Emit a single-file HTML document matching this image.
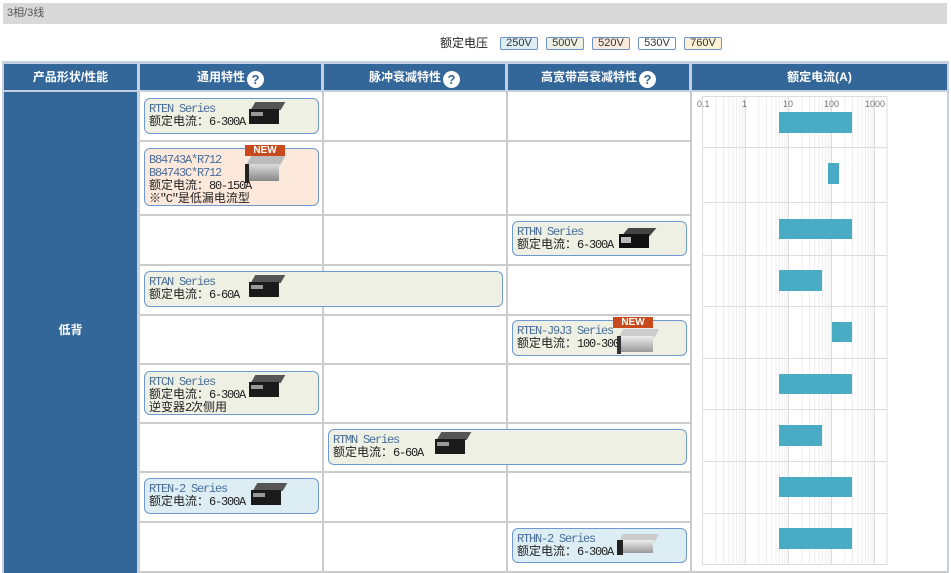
<!DOCTYPE html>
<html><head><meta charset="utf-8">
<style>
*{margin:0;padding:0;box-sizing:border-box}
body{width:951px;height:573px;background:#fff;position:relative;overflow:hidden;font-family:"Liberation Mono","Noto Sans CJK SC",monospace;font-size:12px;color:#222}
.a{position:absolute}
.c{letter-spacing:0}
.top{left:3px;top:3px;width:944px;height:21px;background:#d9d9d9;color:#555;font-family:"Liberation Sans","Noto Sans CJK SC",sans-serif;font-size:11px;line-height:21px;padding-left:4px}
.vl{top:36px;font-family:"Liberation Sans","Noto Sans CJK SC",sans-serif;font-size:12px;line-height:14px}
.vb{top:37px;height:13px;border:1px solid #6e93c9;border-radius:2px;font-family:"Liberation Sans",sans-serif;font-size:11px;line-height:11px;text-align:center;color:#333}
.hd{top:64px;height:26px;background:#336699;color:#fff;font-family:"Liberation Sans","Noto Sans CJK SC",sans-serif;font-weight:bold;font-size:12px;line-height:26px;text-align:center}
.q{display:inline-block;width:17px;height:17px;border-radius:50%;background:#fff;color:#336699;font-size:13px;line-height:17px;text-align:center;vertical-align:-3px;margin-left:2px;font-weight:bold}
.vline{width:2px;background:#ccc}
.hline{height:2px;background:#ccc}
.card{border:1px solid #6f98d0;border-radius:6px;padding:4px 0 0 4px;line-height:13px;overflow:visible;white-space:nowrap;letter-spacing:-1.2px}
.g{background:#edf0e2}.p{background:#fde9dc}.b{background:#dcedf4}
.s{color:#4a6e9a}
.img{position:absolute;width:34px;height:22px;letter-spacing:0}
.img i{position:absolute;display:block}
.new{position:absolute;width:40px;height:11px;background:#c8491b;color:#fff;font-family:"Liberation Sans",sans-serif;font-weight:bold;font-size:10px;line-height:11px;text-align:center;letter-spacing:0}
</style></head><body>
<div class="a top">3相/3线</div>
<div class="a vl" style="left:440px">额定电压</div>
<div class="a vb" style="left:500px;width:38px;background:#dcedf4">250V</div>
<div class="a vb" style="left:546px;width:38px;background:#edf0e2">500V</div>
<div class="a vb" style="left:592px;width:38px;background:#fde9dc">520V</div>
<div class="a vb" style="left:638px;width:38px;background:#fff">530V</div>
<div class="a vb" style="left:684px;width:38px;background:#fdf0d4">760V</div>

<div class="a" style="left:2px;top:61px;width:947px;height:512px;background:#ccc"></div>
<div class="a" style="left:2px;top:61px;width:947px;height:3px;background:#c3d1e2"></div>
<div class="a" style="left:2px;top:61px;width:2px;height:512px;background:#c3d1e2"></div>
<div class="a" style="left:4px;top:92px;width:943px;height:481px;background:#fff"></div>
<div class="a hd" style="left:4px;width:133px">产品形状/性能</div>
<div class="a hd" style="left:140px;width:181px">通用特性<span class="q">?</span></div>
<div class="a hd" style="left:324px;width:181px">脉冲衰减特性<span class="q">?</span></div>
<div class="a hd" style="left:508px;width:181px">高宽带高衰减特性<span class="q">?</span></div>
<div class="a hd" style="left:692px;width:255px">额定电流(A)</div>
<div class="a" style="left:4px;top:92px;width:133px;height:481px;background:#336699;color:#fff;font-family:'Liberation Sans','Noto Sans CJK SC',sans-serif;font-weight:bold;font-size:12px;text-align:center;line-height:14px;padding-top:231px">低背</div>
<div class="a vline" style="left:137px;top:64px;height:509px;background:#c3d1e2;width:3px"></div>
<div class="a vline" style="left:322px;top:92px;height:481px"></div>
<div class="a vline" style="left:506px;top:92px;height:481px"></div>
<div class="a vline" style="left:690px;top:92px;height:481px"></div>
<div class="a" style="left:947px;top:61px;width:2px;height:512px;background:#c3d1e2"></div>
<div class="a" style="left:322px;top:64px;width:2px;height:26px;background:#c3d1e2"></div>
<div class="a" style="left:506px;top:64px;width:2px;height:26px;background:#c3d1e2"></div>
<div class="a" style="left:690px;top:64px;width:2px;height:26px;background:#c3d1e2"></div>
<div class="a" style="left:4px;top:90px;width:943px;height:2px;background:#c3d1e2"></div>
<div class="a hline" style="left:140px;top:140px;width:550px"></div>
<div class="a hline" style="left:140px;top:214px;width:550px"></div>
<div class="a hline" style="left:140px;top:264px;width:550px"></div>
<div class="a hline" style="left:140px;top:314px;width:550px"></div>
<div class="a hline" style="left:140px;top:363px;width:550px"></div>
<div class="a hline" style="left:140px;top:422px;width:550px"></div>
<div class="a hline" style="left:140px;top:471px;width:550px"></div>
<div class="a hline" style="left:140px;top:521px;width:550px"></div>
<div class="a hline" style="left:140px;top:571px;width:807px"></div>

<div class="a card g" style="left:144px;top:98px;width:175px;height:36px"><span class="s">RTEN Series</span><br><span class="c">额定电流：</span>6-300A
<div class="img" style="left:104px;top:3px"><i style="left:4px;top:0;width:30px;height:8px;background:#555;transform:skewX(-30deg)"></i><i style="left:0;top:7px;width:30px;height:15px;background:#1a1a1a"></i><i style="left:2px;top:10px;width:12px;height:4px;background:#999"></i></div></div>
<div class="a card p" style="left:144px;top:148px;width:175px;height:58px;padding-top:5px"><span class="s">B84743A*R712<br>B84743C*R712</span><br><span class="c">额定电流：</span>80-150A<br>※"C"<span class="c">是低漏电流型</span>
<div class="img" style="left:100px;top:6px;width:38px;height:28px"><i style="left:4px;top:0;width:34px;height:10px;background:#bbb;transform:skewX(-30deg)"></i><i style="left:0;top:9px;width:34px;height:17px;background:linear-gradient(#ddd,#888)"></i><i style="left:0;top:9px;width:4px;height:19px;background:#222"></i></div><div class="new" style="left:100px;top:-4px">NEW</div></div>
<div class="a card g" style="left:512px;top:221px;width:175px;height:35px"><span class="s">RTHN Series</span><br><span class="c">额定电流：</span>6-300A
<div class="img" style="left:106px;top:6px"><i style="left:6px;top:0;width:28px;height:8px;background:#444;transform:skewX(-40deg)"></i><i style="left:0;top:6px;width:30px;height:14px;background:#111"></i><i style="left:2px;top:9px;width:10px;height:6px;background:#bbb"></i></div></div>
<div class="a card g" style="left:144px;top:271px;width:359px;height:36px"><span class="s">RTAN Series</span><br><span class="c">额定电流：</span>6-60A
<div class="img" style="left:104px;top:3px"><i style="left:4px;top:0;width:30px;height:8px;background:#555;transform:skewX(-30deg)"></i><i style="left:0;top:7px;width:30px;height:15px;background:#1a1a1a"></i><i style="left:2px;top:10px;width:12px;height:4px;background:#999"></i></div></div>
<div class="a card g" style="left:512px;top:320px;width:175px;height:36px"><span class="s">RTEN-J9J3 Series</span><br><span class="c">额定电流：</span>100-300A
<div class="img" style="left:104px;top:8px;width:40px;height:26px"><i style="left:4px;top:0;width:36px;height:8px;background:#ccc;transform:skewX(-30deg)"></i><i style="left:0;top:7px;width:36px;height:16px;background:linear-gradient(#eee,#999)"></i><i style="left:0;top:7px;width:4px;height:18px;background:#333"></i></div><div class="new" style="left:100px;top:-4px">NEW</div></div>
<div class="a card g" style="left:144px;top:371px;width:175px;height:44px"><span class="s">RTCN Series</span><br><span class="c">额定电流：</span>6-300A<br><span class="c">逆变器</span>2<span class="c">次侧用</span>
<div class="img" style="left:104px;top:3px"><i style="left:4px;top:0;width:30px;height:8px;background:#555;transform:skewX(-30deg)"></i><i style="left:0;top:7px;width:30px;height:15px;background:#1a1a1a"></i><i style="left:2px;top:10px;width:12px;height:4px;background:#999"></i></div></div>
<div class="a card g" style="left:328px;top:429px;width:359px;height:36px"><span class="s">RTMN Series</span><br><span class="c">额定电流：</span>6-60A
<div class="img" style="left:106px;top:2px"><i style="left:4px;top:0;width:30px;height:8px;background:#555;transform:skewX(-30deg)"></i><i style="left:0;top:7px;width:30px;height:15px;background:#1a1a1a"></i><i style="left:2px;top:10px;width:12px;height:4px;background:#999"></i></div></div>
<div class="a card b" style="left:144px;top:478px;width:175px;height:36px"><span class="s">RTEN-2 Series</span><br><span class="c">额定电流：</span>6-300A
<div class="img" style="left:106px;top:4px"><i style="left:4px;top:0;width:30px;height:8px;background:#555;transform:skewX(-30deg)"></i><i style="left:0;top:7px;width:30px;height:15px;background:#1a1a1a"></i><i style="left:2px;top:10px;width:12px;height:4px;background:#999"></i></div></div>
<div class="a card b" style="left:512px;top:528px;width:175px;height:35px"><span class="s">RTHN-2 Series</span><br><span class="c">额定电流：</span>6-300A
<div class="img" style="left:104px;top:5px;width:40px"><i style="left:4px;top:0;width:36px;height:7px;background:#ccc;transform:skewX(-30deg)"></i><i style="left:0;top:6px;width:36px;height:13px;background:linear-gradient(#eee,#999)"></i><i style="left:0;top:6px;width:6px;height:15px;background:#222"></i></div></div>

<svg class="a" style="left:0;top:0" width="951" height="573">
<g stroke="#eee" stroke-width="1">
<line x1="715.9" y1="97" x2="715.9" y2="564"/><line x1="723.5" y1="97" x2="723.5" y2="564"/><line x1="728.9" y1="97" x2="728.9" y2="564"/><line x1="733.1" y1="97" x2="733.1" y2="564"/><line x1="736.5" y1="97" x2="736.5" y2="564"/><line x1="739.3" y1="97" x2="739.3" y2="564"/><line x1="741.8" y1="97" x2="741.8" y2="564"/><line x1="744" y1="97" x2="744" y2="564"/>
<line x1="758.9" y1="97" x2="758.9" y2="564"/><line x1="766.5" y1="97" x2="766.5" y2="564"/><line x1="771.9" y1="97" x2="771.9" y2="564"/><line x1="776.1" y1="97" x2="776.1" y2="564"/><line x1="779.5" y1="97" x2="779.5" y2="564"/><line x1="782.3" y1="97" x2="782.3" y2="564"/><line x1="784.8" y1="97" x2="784.8" y2="564"/><line x1="787" y1="97" x2="787" y2="564"/>
<line x1="801.9" y1="97" x2="801.9" y2="564"/><line x1="809.5" y1="97" x2="809.5" y2="564"/><line x1="814.9" y1="97" x2="814.9" y2="564"/><line x1="819.1" y1="97" x2="819.1" y2="564"/><line x1="822.5" y1="97" x2="822.5" y2="564"/><line x1="825.3" y1="97" x2="825.3" y2="564"/><line x1="827.8" y1="97" x2="827.8" y2="564"/><line x1="830" y1="97" x2="830" y2="564"/>
<line x1="844.9" y1="97" x2="844.9" y2="564"/><line x1="852.5" y1="97" x2="852.5" y2="564"/><line x1="857.9" y1="97" x2="857.9" y2="564"/><line x1="862.1" y1="97" x2="862.1" y2="564"/><line x1="865.5" y1="97" x2="865.5" y2="564"/><line x1="868.3" y1="97" x2="868.3" y2="564"/><line x1="870.8" y1="97" x2="870.8" y2="564"/><line x1="873" y1="97" x2="873" y2="564"/>
</g>
<g stroke="#ddd" stroke-width="1">
<line x1="745.5" y1="97" x2="745.5" y2="564"/><line x1="788.5" y1="97" x2="788.5" y2="564"/><line x1="831.5" y1="97" x2="831.5" y2="564"/><line x1="874.5" y1="97" x2="874.5" y2="564"/>
<line x1="703" y1="147.5" x2="887" y2="147.5"/><line x1="703" y1="202.5" x2="887" y2="202.5"/><line x1="703" y1="255.5" x2="887" y2="255.5"/><line x1="703" y1="306.5" x2="887" y2="306.5"/><line x1="703" y1="358.5" x2="887" y2="358.5"/><line x1="703" y1="409.5" x2="887" y2="409.5"/><line x1="703" y1="461.5" x2="887" y2="461.5"/><line x1="703" y1="513.5" x2="887" y2="513.5"/>
<rect x="702.5" y="96.5" width="184.5" height="468" fill="none"/>
</g>
<g font-family="Liberation Sans,sans-serif" font-size="9" fill="#777">
<text x="697" y="107">0.1</text><text x="742" y="107">1</text><text x="783" y="107">10</text><text x="824" y="107">100</text><text x="865" y="107">1000</text>
</g>
<g fill="#4aabc5">
<rect x="779" y="112" width="73" height="21"/>
<rect x="828" y="163" width="11" height="21"/>
<rect x="779" y="219" width="73" height="20"/>
<rect x="779" y="270" width="43" height="21"/>
<rect x="832" y="322" width="20" height="20"/>
<rect x="779" y="374" width="73" height="20"/>
<rect x="779" y="425" width="43" height="21"/>
<rect x="779" y="477" width="73" height="20"/>
<rect x="779" y="528" width="73" height="21"/>
</g>
</svg>
</body></html>
